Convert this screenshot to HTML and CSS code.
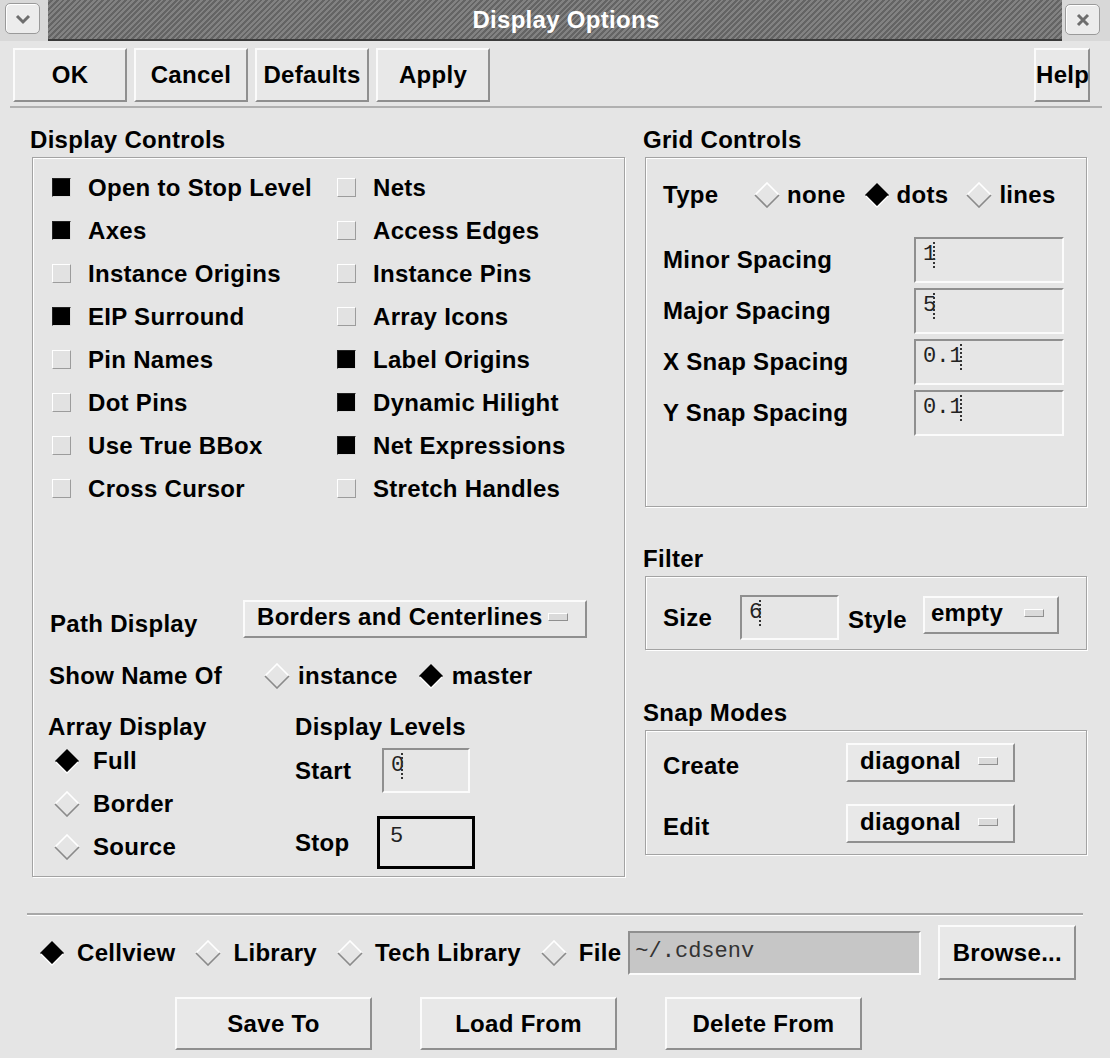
FILE: index.html
```html
<!DOCTYPE html>
<html>
<head>
    <title>Display Options</title>
    <link rel="stylesheet" href="styles.css">
</head>
<body>
    <svg class="defs" width="0" height="0">
        <symbol id="dia-off" viewBox="0 0 26 26">
            <path d="M1 13 L13 1 L25 13" fill="none" stroke="#ffffff" stroke-width="1.6"/>
            <path d="M1 13 L13 25 L25 13" fill="none" stroke="#8a8a8a" stroke-width="1.6"/>
        </symbol>
        <symbol id="dia-on" viewBox="0 0 26 26">
            <path d="M13 1 L25 13 L13 25 L1 13 Z" fill="#000000"/>
            <path d="M2 14 L13 25 L24 14" fill="none" stroke="#ffffff" stroke-width="1.3"/>
        </symbol>
    </svg>

    <div class="titlebar">
        <div class="wm-btn wm-menu">
            <svg width="18" height="12" viewBox="0 0 18 12"><path d="M3 3 L9 9 L15 3" fill="none" stroke="#6e6e6e" stroke-width="3"/></svg>
        </div>
        <div class="title-stripes"><span>Display Options</span></div>
        <div class="wm-btn wm-close">
            <svg width="14" height="14" viewBox="0 0 14 14"><path d="M2 2 L12 12 M12 2 L2 12" stroke="#6e6e6e" stroke-width="3"/></svg>
        </div>
    </div>

    <div class="toolbar">
        <button class="btn tb-btn">OK</button>
        <button class="btn tb-btn">Cancel</button>
        <button class="btn tb-btn">Defaults</button>
        <button class="btn tb-btn">Apply</button>
        <button class="btn help-btn">Help</button>
    </div>

    <div class="main">
        <div class="col-left">
            <div class="group-title">Display Controls</div>
            <div class="group display-box">
                <div class="checks">
                    <div class="check"><span class="cb on"></span>Open to Stop Level</div>
                    <div class="check"><span class="cb"></span>Nets</div>
                    <div class="check"><span class="cb on"></span>Axes</div>
                    <div class="check"><span class="cb"></span>Access Edges</div>
                    <div class="check"><span class="cb"></span>Instance Origins</div>
                    <div class="check"><span class="cb"></span>Instance Pins</div>
                    <div class="check"><span class="cb on"></span>EIP Surround</div>
                    <div class="check"><span class="cb"></span>Array Icons</div>
                    <div class="check"><span class="cb"></span>Pin Names</div>
                    <div class="check"><span class="cb on"></span>Label Origins</div>
                    <div class="check"><span class="cb"></span>Dot Pins</div>
                    <div class="check"><span class="cb on"></span>Dynamic Hilight</div>
                    <div class="check"><span class="cb"></span>Use True BBox</div>
                    <div class="check"><span class="cb on"></span>Net Expressions</div>
                    <div class="check"><span class="cb"></span>Cross Cursor</div>
                    <div class="check"><span class="cb"></span>Stretch Handles</div>
                </div>

                <div class="path-row">
                    <span class="path-label">Path Display</span>
                    <div class="option-menu path-menu">Borders and Centerlines<span class="ind"></span></div>
                </div>

                <div class="show-row">
                    <span class="show-label">Show Name Of</span>
                    <span class="radio"><svg class="dia"><use href="#dia-off"/></svg>instance</span>
                    <span class="radio"><svg class="dia"><use href="#dia-on"/></svg>master</span>
                </div>

                <div class="array-section">
                    <div class="array-col">
                        <div class="sub-title">Array Display</div>
                        <div class="radio stack"><svg class="dia"><use href="#dia-on"/></svg>Full</div>
                        <div class="radio stack"><svg class="dia"><use href="#dia-off"/></svg>Border</div>
                        <div class="radio stack"><svg class="dia"><use href="#dia-off"/></svg>Source</div>
                    </div>
                    <div class="levels-col">
                        <div class="sub-title">Display Levels</div>
                        <div class="level-row start-row">
                            <span class="level-label">Start</span>
                            <div class="entry start-entry">0<span class="caret"></span></div>
                        </div>
                        <div class="level-row stop-row">
                            <span class="level-label">Stop</span>
                            <div class="entry stop-entry">5</div>
                        </div>
                    </div>
                </div>
            </div>
        </div>

        <div class="col-right">
            <div class="group-title">Grid Controls</div>
            <div class="group grid-box">
                <div class="type-row">
                    <span class="type-label">Type</span>
                    <span class="radio"><svg class="dia"><use href="#dia-off"/></svg>none</span>
                    <span class="radio"><svg class="dia"><use href="#dia-on"/></svg>dots</span>
                    <span class="radio"><svg class="dia"><use href="#dia-off"/></svg>lines</span>
                </div>
                <div class="spacing-row first-spacing">
                    <span class="spacing-label">Minor Spacing</span>
                    <div class="entry spacing-entry">1<span class="caret"></span></div>
                </div>
                <div class="spacing-row">
                    <span class="spacing-label">Major Spacing</span>
                    <div class="entry spacing-entry">5<span class="caret"></span></div>
                </div>
                <div class="spacing-row">
                    <span class="spacing-label">X Snap Spacing</span>
                    <div class="entry spacing-entry">0.1<span class="caret"></span></div>
                </div>
                <div class="spacing-row">
                    <span class="spacing-label">Y Snap Spacing</span>
                    <div class="entry spacing-entry">0.1<span class="caret"></span></div>
                </div>
            </div>

            <div class="group-title filter-title">Filter</div>
            <div class="group filter-box">
                <div class="filter-row">
                    <span class="size-label">Size</span>
                    <div class="entry size-entry">6<span class="caret"></span></div>
                    <span class="style-label">Style</span>
                    <div class="option-menu style-menu">empty<span class="ind"></span></div>
                </div>
            </div>

            <div class="group-title snap-title">Snap Modes</div>
            <div class="group snap-box">
                <div class="snap-row">
                    <span class="snap-label">Create</span>
                    <div class="option-menu snap-menu">diagonal<span class="ind"></span></div>
                </div>
                <div class="snap-row edit-row">
                    <span class="snap-label">Edit</span>
                    <div class="option-menu snap-menu">diagonal<span class="ind"></span></div>
                </div>
            </div>
        </div>
    </div>

    <div class="separator"></div>

    <div class="target-row">
        <span class="radio"><svg class="dia"><use href="#dia-on"/></svg>Cellview</span>
        <span class="radio"><svg class="dia"><use href="#dia-off"/></svg>Library</span>
        <span class="radio"><svg class="dia"><use href="#dia-off"/></svg>Tech Library</span>
        <span class="radio"><svg class="dia"><use href="#dia-off"/></svg>File</span>
        <div class="entry file-entry">~/.cdsenv</div>
        <button class="btn browse-btn">Browse...</button>
    </div>

    <div class="bottom-buttons">
        <button class="btn bottom-btn">Save To</button>
        <button class="btn bottom-btn">Load From</button>
        <button class="btn bottom-btn">Delete From</button>
    </div>
</body>
</html>
```

FILE: styles.css
```css
body {
    margin: 0;
    background-color: #e5e5e5;
    font-family: "Liberation Sans", Arial, sans-serif;
    font-size: 24px;
    font-weight: bold;
    letter-spacing: 0.3px;
    color: #000;
    width: 1110px;
    height: 1058px;
    overflow: hidden;
}
.defs {
    position: absolute;
}

/* title bar */
.titlebar {
    display: flex;
    height: 41px;
    background-color: #d8d8d8;
}
.wm-btn {
    box-sizing: border-box;
    width: 35px;
    height: 31px;
    border: 1px solid #9a9a9a;
    border-radius: 5px;
    background-color: #ececec;
    box-shadow: inset 1px 1px 0 #ffffff;
    display: flex;
    align-items: center;
    justify-content: center;
}
.wm-menu {
    margin: 3px 8px 0 5px;
}
.wm-close {
    margin: 4px 10px 0 3px;
}
.title-stripes {
    flex: 1;
    box-sizing: border-box;
    display: flex;
    align-items: center;
    justify-content: center;
    padding-left: 22px;
    color: #ffffff;
    background: repeating-linear-gradient(135deg, #828282 0px, #828282 2px, #646464 2px, #646464 4px);
    border-bottom: 2px solid #3a3a3a;
}

/* buttons */
.toolbar {
    display: flex;
    gap: 7px;
    height: 67px;
    box-sizing: border-box;
    margin: 0 8px 0 10px;
    padding: 7px 12px 0 3px;
    border-bottom: 2px solid #b0b0b0;
}
.btn {
    font: inherit;
    letter-spacing: inherit;
    color: #000;
    background-color: #e8e8e8;
    border: 2px solid;
    border-color: #fbfbfb #8f8f8f #8f8f8f #fbfbfb;
    padding: 0;
    height: 54px;
    box-sizing: border-box;
}
.tb-btn {
    width: 114px;
}
.help-btn {
    width: 56px;
    margin-left: auto;
}

/* columns */
.main {
    display: flex;
    gap: 16px;
    padding-left: 30px;
}
.col-left {
    width: 597px;
}
.col-right {
    width: 444px;
}
.group-title {
    line-height: 26px;
    padding: 19px 0 4px;
}
.filter-title {
    padding-top: 39px;
}
.snap-title {
    padding-top: 50px;
}
.group {
    box-sizing: border-box;
    margin-left: 2px;
    border: 1px solid #a3a3a3;
    box-shadow: inset 1px 1px 0 #ffffff, 1px 1px 0 #ffffff;
}

/* display controls */
.display-box {
    width: 593px;
    height: 720px;
}
.checks {
    display: grid;
    grid-template-columns: 285px auto;
    grid-auto-rows: 43px;
    padding: 8px 0 0 19px;
}
.check {
    display: flex;
    align-items: center;
    gap: 17px;
}
.cb {
    width: 19px;
    height: 19px;
    box-sizing: border-box;
    border: 1px solid;
    border-color: #ffffff #9c9c9c #9c9c9c #ffffff;
    background-color: #e2e2e2;
}
.cb.on {
    background-color: #000;
    border-color: #222 #dcdcdc #dcdcdc #222;
}
.path-row {
    display: flex;
    align-items: center;
    height: 38px;
    margin-top: 90px;
    padding-left: 17px;
}
.path-label {
    width: 193px;
    padding-top: 10px;
}
.option-menu {
    box-sizing: border-box;
    display: flex;
    align-items: center;
    justify-content: space-between;
    height: 38px;
    border: 2px solid;
    border-color: #fbfbfb #8f8f8f #8f8f8f #fbfbfb;
    background-color: #e8e8e8;
    padding: 0 17px 4px 12px;
}
.path-menu {
    width: 344px;
}
.ind {
    width: 18px;
    height: 6px;
    border: 1px solid;
    border-color: #ffffff #8f8f8f #8f8f8f #ffffff;
    background-color: #dadada;
}
.show-row {
    display: flex;
    align-items: center;
    height: 38px;
    margin-top: 19px;
    padding-left: 16px;
}
.show-label {
    width: 215px;
}
.radio {
    display: flex;
    align-items: center;
    gap: 8px;
}
.show-row .radio + .radio {
    margin-left: 20px;
}
.dia {
    width: 26px;
    height: 26px;
    flex: none;
}
.array-section {
    display: flex;
    margin-top: 20px;
}
.array-col {
    width: 262px;
    box-sizing: border-box;
    padding-left: 15px;
}
.sub-title {
    line-height: 24px;
}
.stack {
    height: 43px;
    padding-left: 6px;
    gap: 13px;
}
.level-row {
    display: flex;
    align-items: center;
}
.level-label {
    width: 87px;
}
.start-row {
    margin-top: 9px;
}
.stop-row {
    margin-top: 23px;
}
.entry {
    box-sizing: border-box;
    border: 2px solid;
    border-color: #8f8f8f #fbfbfb #fbfbfb #8f8f8f;
    background-color: #e6e6e6;
    font-family: "Liberation Mono", monospace;
    font-weight: normal;
    font-size: 22px;
    letter-spacing: 0;
    color: #222;
    padding: 3px 0 0 7px;
    white-space: nowrap;
}
.caret {
    display: inline-block;
    height: 26px;
    margin-left: -3px;
    border-left: 2px dotted #333;
    vertical-align: top;
}
.start-entry {
    width: 88px;
    height: 45px;
}
.stop-entry {
    width: 98px;
    height: 53px;
    margin-left: -5px;
    border: 3px solid #000;
    padding: 5px 0 0 10px;
}

/* grid controls */
.grid-box {
    width: 442px;
    height: 350px;
    padding: 18px 0 0 17px;
}
.type-row {
    display: flex;
    align-items: center;
    height: 38px;
}
.type-label {
    width: 91px;
}
.type-row .radio {
    gap: 7px;
}
.type-row .radio + .radio {
    margin-left: 18px;
}
.spacing-row {
    display: flex;
    align-items: center;
    height: 46px;
    margin-top: 5px;
}
.first-spacing {
    margin-top: 23px;
}
.spacing-label {
    width: 251px;
}
.spacing-entry {
    width: 150px;
    height: 46px;
}

/* filter */
.filter-box {
    width: 442px;
    height: 74px;
    padding: 18px 0 0 17px;
}
.filter-row {
    display: flex;
    align-items: center;
    height: 45px;
}
.size-label {
    width: 77px;
}
.size-entry {
    width: 99px;
    height: 45px;
}
.style-label {
    margin-left: 9px;
    padding-top: 4px;
}
.style-menu {
    width: 136px;
    margin-left: 16px;
    padding: 0 13px 4px 6px;
    margin-top: -5px;
}

/* snap modes */
.snap-box {
    width: 442px;
    height: 125px;
    padding: 12px 0 0 17px;
}
.snap-row {
    display: flex;
    align-items: center;
    height: 39px;
}
.edit-row {
    margin-top: 22px;
}
.snap-label {
    width: 183px;
    padding-top: 6px;
}
.snap-menu {
    width: 169px;
    height: 39px;
    padding-right: 15px;
}

/* bottom */
.separator {
    margin: 36px 27px 0;
    border-top: 2px solid #a8a8a8;
    border-bottom: 1px solid #ffffff;
}
.target-row {
    display: flex;
    align-items: center;
    height: 55px;
    margin-top: 9px;
    padding-left: 39px;
}
.target-row .radio {
    gap: 12px;
}
.target-row .radio + .radio {
    margin-left: 20px;
}
.file-entry {
    width: 293px;
    height: 44px;
    margin-left: 7px;
    background-color: #c6c6c6;
    color: #333;
    padding: 6px 0 0 5px;
}
.browse-btn {
    width: 138px;
    height: 55px;
    margin-left: 17px;
}
.bottom-buttons {
    display: flex;
    gap: 48px;
    margin-top: 17px;
    padding-left: 175px;
}
.bottom-btn {
    width: 197px;
    height: 53px;
}
```
